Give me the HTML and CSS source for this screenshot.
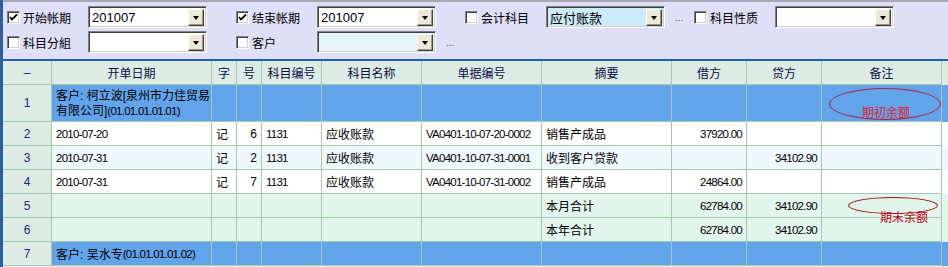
FILE: index.html
```html
<!DOCTYPE html>
<html lang="zh-CN">

<head>
    <meta charset="UTF-8">
    <title>客户明细账</title>
    <link rel="stylesheet" href="styles.css">
</head>

<body>
    <div class="window">
        <div class="filters">
            <div class="filter-row">
                <div class="field">
                    <label class="field-label"><span class="check checked"><svg viewBox="0 0 9 9"><polyline points="1,4 3,6.5 8,1.5"/></svg></span>开始帐期</label>
                    <div class="combo"><span class="combo-text">201007</span><span class="combo-btn"></span></div>
                </div>
                <div class="field">
                    <label class="field-label"><span class="check checked"><svg viewBox="0 0 9 9"><polyline points="1,4 3,6.5 8,1.5"/></svg></span>结束帐期</label>
                    <div class="combo"><span class="combo-text">201007</span><span class="combo-btn"></span></div>
                </div>
                <div class="field">
                    <label class="field-label"><span class="check"></span>会计科目</label>
                    <div class="combo combo-blue"><span class="combo-text">应付账款</span><span class="combo-btn"></span></div>
                    <span class="more">...</span>
                </div>
                <div class="field">
                    <label class="field-label"><span class="check"></span>科目性质</label>
                    <div class="combo"><span class="combo-text"></span><span class="combo-btn"></span></div>
                </div>
            </div>
            <div class="filter-row">
                <div class="field">
                    <label class="field-label"><span class="check"></span>科目分組</label>
                    <div class="combo"><span class="combo-text"></span><span class="combo-btn"></span></div>
                </div>
                <div class="field">
                    <label class="field-label"><span class="check"></span>客户</label>
                    <div class="combo combo-pale"><span class="combo-text"></span><span class="combo-btn"></span></div>
                    <span class="more">...</span>
                </div>
            </div>
        </div>

        <div class="grid">
            <div class="grid-row head">
                <div class="cell num">–</div>
                <div class="cell">开单日期</div>
                <div class="cell">字</div>
                <div class="cell">号</div>
                <div class="cell">科目编号</div>
                <div class="cell">科目名称</div>
                <div class="cell">单据编号</div>
                <div class="cell">摘要</div>
                <div class="cell">借方</div>
                <div class="cell">贷方</div>
                <div class="cell">备注</div>
            </div>

            <div class="grid-row group tall">
                <div class="cell num">1</div>
                <div class="cell text wrap">客户: 柯立波[泉州市力佳贸易<br>有限公司]<span class="latin">(01.01.01.01.01)</span></div>
                <div class="cell"></div>
                <div class="cell"></div>
                <div class="cell"></div>
                <div class="cell"></div>
                <div class="cell"></div>
                <div class="cell"></div>
                <div class="cell"></div>
                <div class="cell"></div>
                <div class="cell note">
                    <span class="ring ring-open"></span>
                    <span class="mark mark-open">期初余额</span>
                </div>
            </div>

            <div class="grid-row">
                <div class="cell num">2</div>
                <div class="cell text latin">2010-07-20</div>
                <div class="cell text">记</div>
                <div class="cell amount">6</div>
                <div class="cell text latin">1131</div>
                <div class="cell text">应收账款</div>
                <div class="cell text latin">VA0401-10-07-20-0002</div>
                <div class="cell text">销售产成品</div>
                <div class="cell amount latin">37920.00</div>
                <div class="cell amount"></div>
                <div class="cell"></div>
            </div>

            <div class="grid-row alt">
                <div class="cell num">3</div>
                <div class="cell text latin">2010-07-31</div>
                <div class="cell text">记</div>
                <div class="cell amount">2</div>
                <div class="cell text latin">1131</div>
                <div class="cell text">应收账款</div>
                <div class="cell text latin">VA0401-10-07-31-0001</div>
                <div class="cell text">收到客户贷款</div>
                <div class="cell amount"></div>
                <div class="cell amount latin">34102.90</div>
                <div class="cell"></div>
            </div>

            <div class="grid-row">
                <div class="cell num">4</div>
                <div class="cell text latin">2010-07-31</div>
                <div class="cell text">记</div>
                <div class="cell amount">7</div>
                <div class="cell text latin">1131</div>
                <div class="cell text">应收账款</div>
                <div class="cell text latin">VA0401-10-07-31-0002</div>
                <div class="cell text">销售产成品</div>
                <div class="cell amount latin">24864.00</div>
                <div class="cell amount"></div>
                <div class="cell"></div>
            </div>

            <div class="grid-row total">
                <div class="cell num">5</div>
                <div class="cell"></div>
                <div class="cell"></div>
                <div class="cell"></div>
                <div class="cell"></div>
                <div class="cell"></div>
                <div class="cell"></div>
                <div class="cell text">本月合计</div>
                <div class="cell amount latin">62784.00</div>
                <div class="cell amount latin">34102.90</div>
                <div class="cell note">
                    <span class="ring ring-close"></span>
                    <span class="mark mark-close">期末余额</span>
                </div>
            </div>

            <div class="grid-row total">
                <div class="cell num">6</div>
                <div class="cell"></div>
                <div class="cell"></div>
                <div class="cell"></div>
                <div class="cell"></div>
                <div class="cell"></div>
                <div class="cell"></div>
                <div class="cell text">本年合计</div>
                <div class="cell amount latin">62784.00</div>
                <div class="cell amount latin">34102.90</div>
                <div class="cell"></div>
            </div>

            <div class="grid-row group">
                <div class="cell num">7</div>
                <div class="cell text">客户: 吴水专<span class="latin">(01.01.01.01.02)</span></div>
                <div class="cell"></div>
                <div class="cell"></div>
                <div class="cell"></div>
                <div class="cell"></div>
                <div class="cell"></div>
                <div class="cell"></div>
                <div class="cell"></div>
                <div class="cell"></div>
                <div class="cell"></div>
            </div>
        </div>
    </div>
</body>

</html>
```

FILE: styles.css
```css
body {
    margin: 0;
    overflow: hidden;
    background: #f2f4fa;
    font-family: 'Liberation Sans', 'Noto Sans CJK SC', sans-serif;
    font-size: 12px;
    color: #000;
}

.window {
    height: 267px;
    border-left: 3px solid #2f5f9f;
    box-sizing: border-box;
}

/* filter panel */

.filters {
    background: #dfdff7;
    border-top: 2px solid #a8a8b4;
    padding: 4px 0 6px 4px;
    display: flex;
    flex-direction: column;
    gap: 3px;
}

.filter-row {
    display: flex;
    height: 22px;
}

.field {
    display: flex;
    align-items: center;
    width: 229px;
    flex-shrink: 0;
}

.field-label {
    display: flex;
    align-items: center;
    gap: 3px;
    width: 81px;
    flex-shrink: 0;
}

.check {
    width: 13px;
    height: 13px;
    box-sizing: border-box;
    background: #fff;
    border-top: 1px solid #808080;
    border-left: 1px solid #808080;
    border-bottom: 1px solid #fff;
    border-right: 1px solid #fff;
    box-shadow: inset 1px 1px 0 #404040, inset -1px -1px 0 #d4d0c8;
    display: flex;
    align-items: center;
    justify-content: center;
}

.check svg {
    width: 9px;
    height: 9px;
    fill: none;
    stroke: #000;
    stroke-width: 1.8;
}

.combo {
    position: relative;
    display: flex;
    align-items: center;
    width: 119px;
    height: 22px;
    box-sizing: border-box;
    background: #fff;
    border-top: 1px solid #808080;
    border-left: 1px solid #808080;
    border-bottom: 1px solid #fff;
    border-right: 1px solid #fff;
    box-shadow: inset 1px 1px 0 #404040, inset -1px -1px 0 #d4d0c8;
    padding: 2px 2px 2px 3px;
}

.combo-blue {
    background: #cdeafb;
}

.combo-pale {
    background: #e6f5fb;
}

.combo-text {
    flex: 1;
    font-size: 13px;
}

.combo-btn {
    width: 16px;
    height: 17px;
    box-sizing: border-box;
    background: #ece9d8;
    border-top: 1px solid #fff;
    border-left: 1px solid #fff;
    border-bottom: 1px solid #404040;
    border-right: 1px solid #404040;
    box-shadow: inset -1px -1px 0 #9a988c;
    display: flex;
    align-items: center;
    justify-content: center;
}

.combo-btn::after {
    content: '';
    border-left: 3.5px solid transparent;
    border-right: 3.5px solid transparent;
    border-top: 4px solid #000;
    margin-top: 2px;
}

.more {
    margin-left: 10px;
    color: #555;
    font-size: 10px;
}

/* data grid */

.grid {
    border-top: 2px solid #2860b0;
}

.grid-row {
    display: grid;
    grid-template-columns: 49px 160px 25px 25px 60px 100px 120px 130px 75px 75px 120px;
    height: 24px;
    background: #fff;
}

.grid-row.tall {
    height: 37px;
}

.cell {
    border-right: 1px solid #a6c8ae;
    border-bottom: 1px solid #a6c8ae;
    display: flex;
    align-items: center;
    justify-content: center;
    white-space: nowrap;
    overflow: visible;
}

.cell.text {
    justify-content: flex-start;
    padding-left: 4px;
}

.cell.wrap {
    display: block;
    padding-top: 4px;
    line-height: 15px;
}

.cell.amount {
    justify-content: flex-end;
    padding-right: 4px;
}

.latin {
    font-size: 11.5px;
    letter-spacing: -0.75px;
}

.cell.num {
    background: #dcece4;
    color: #1c2878;
}

.head {
    background: #dcece4;
    color: #0c0c48;
}

.alt {
    background: #eef8fb;
}

.total {
    background: #e2f5ed;
}

.group {
    background: #62a4ea;
}

/* hand-drawn remarks over the note column */

.note {
    position: relative;
}

.ring {
    position: absolute;
    border-radius: 50%;
    box-sizing: border-box;
}

.ring-open {
    left: 7px;
    top: 3px;
    width: 112px;
    height: 32px;
    border: 1px solid #b02050;
}

.ring-close {
    left: 26px;
    top: 3px;
    width: 90px;
    height: 17px;
    border: 1px solid #a01010;
}

.mark {
    position: absolute;
    font-size: 12px;
}

.mark-open {
    left: 40px;
    top: 18px;
    color: #e02030;
}

.mark-close {
    left: 58px;
    top: 14px;
    color: #c00010;
}
```
